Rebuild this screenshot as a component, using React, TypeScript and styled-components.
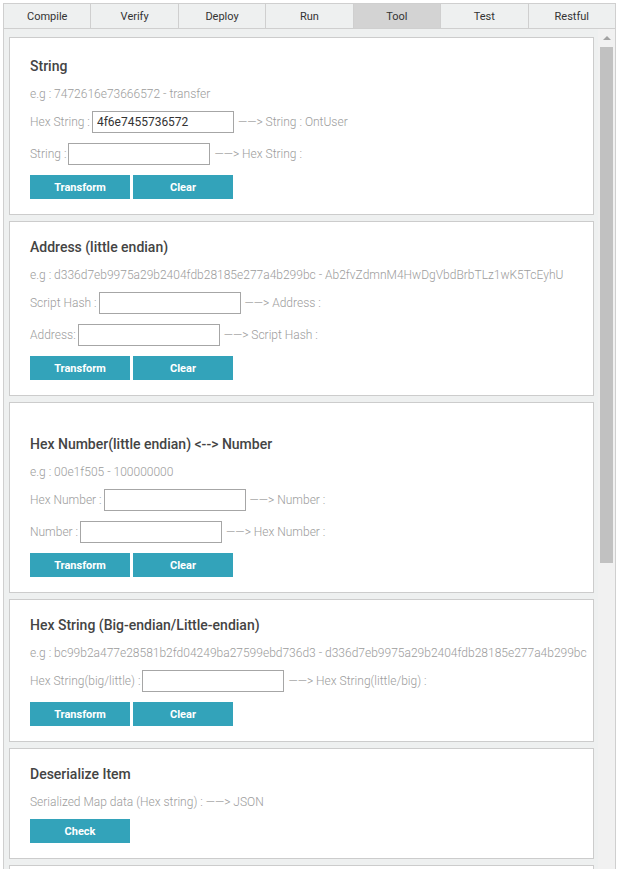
import React from "react";
import styled, { createGlobalStyle } from "styled-components";

const Global = createGlobalStyle`
  html, body { margin: 0; padding: 0; overflow: hidden; background: #fff; }
  body { font-family: Roboto, "Liberation Sans", Arial, sans-serif; }
  * { box-sizing: border-box; }
`;

const Frame = styled.div`
  margin: 3px 5px 0 3px;
  height: calc(100vh - 3px);
  border: 1px solid #cfcfcf;
  border-bottom: none;
  display: flex;
  flex-direction: column;
  overflow: hidden;
`;

const TabBar = styled.div`
  display: flex;
  height: 25px;
  border-bottom: 1px solid #cfcfcf;
  flex: none;
`;

const Tab = styled.div<{ $active?: boolean }>`
  flex: 1;
  display: flex;
  align-items: center;
  justify-content: center;
  font-size: 11px;
  color: #333;
  background: ${(p) => (p.$active ? "#d3d3d3" : "#eef0f0")};
  border-right: 1px solid #cfcfcf;
  &:last-child { border-right: none; }
`;

const Body = styled.div`
  flex: 1;
  display: flex;
  background: #eef0f0;
  min-height: 0;
`;

const Column = styled.div`
  flex: 1;
  display: flex;
  flex-direction: column;
  gap: 6px;
  padding: 8px 4px 0 5px;
  overflow: hidden;
`;

const Track = styled.div`
  width: 17px;
  flex: none;
  background: #f1f1f1;
  display: flex;
  flex-direction: column;
  align-items: center;
`;

const ArrowBox = styled.div`
  height: 18px;
  width: 17px;
  display: flex;
  align-items: center;
  justify-content: center;
  padding-bottom: 2px;
`;

const Thumb = styled.div`
  width: 13px;
  height: 516px;
  background: #c1c1c1;
`;

const Card = styled.section<{ $pt: number }>`
  background: #fff;
  border: 1px solid #cccccc;
  padding: ${(p) => p.$pt}px 20px 15px;
  display: flex;
  flex-direction: column;
  flex: none;
  min-height: 60px;
`;

const Title = styled.h3`
  margin: 0 0 8px;
  font-size: 14px;
  line-height: 20px;
  font-weight: 500;
  color: #444;
`;

const Note = styled.div`
  font-size: 12px;
  line-height: 20px;
  font-weight: 300;
  color: #9c9c9c;
  white-space: nowrap;
`;

const Row = styled.div<{ $mt: number }>`
  margin-top: ${(p) => p.$mt}px;
  height: 24px;
  display: flex;
  align-items: center;
  font-size: 12px;
  font-weight: 300;
  color: #9c9c9c;
  white-space: nowrap;
`;

const Field = styled.input`
  width: 142px;
  height: 22px;
  margin: 0 4px 0 2px;
  padding: 0 4px;
  border: 1px solid #a6a6a6;
  border-radius: 0;
  font-family: Roboto, "Liberation Sans", Arial, sans-serif;
  font-size: 12px;
  color: #333;
  outline: none;
`;

const Buttons = styled.div<{ $mt: number }>`
  margin-top: ${(p) => p.$mt}px;
  display: flex;
  gap: 3px;
`;

const Button = styled.button`
  width: 100px;
  height: 24px;
  border: none;
  padding: 0;
  background: #33a3ba;
  color: #fff;
  font-family: Roboto, "Liberation Sans", Arial, sans-serif;
  font-size: 11px;
  font-weight: 700;
  cursor: pointer;
`;

const tabs = ["Compile", "Verify", "Deploy", "Run", "Tool", "Test", "Restful"];

function ConvRow({ mt, label, value, result }: { mt: number; label: string; value?: string; result: string }) {
  return (
    <Row $mt={mt}>
      {label}
      <Field defaultValue={value ?? ""} />
      {result}
    </Row>
  );
}

function Actions({ mt }: { mt: number }) {
  return (
    <Buttons $mt={mt}>
      <Button>Transform</Button>
      <Button>Clear</Button>
    </Buttons>
  );
}

export default function App() {
  return (
    <>
      <Global />
      <Frame>
        <TabBar>
          {tabs.map((t) => (
            <Tab key={t} $active={t === "Tool"}>
              {t}
            </Tab>
          ))}
        </TabBar>
        <Body>
          <Column>
            <Card $pt={18}>
              <Title>String</Title>
              <Note>e.g : 7472616e73666572 - transfer</Note>
              <ConvRow mt={6} label="Hex String :" value="4f6e7455736572" result="——> String : OntUser" />
              <ConvRow mt={8} label="String :" result="——> Hex String :" />
              <Actions mt={9} />
            </Card>
            <Card $pt={15}>
              <Title>Address (little endian)</Title>
              <Note>e.g : d336d7eb9975a29b2404fdb28185e277a4b299bc - Ab2fvZdmnM4HwDgVbdBrbTLz1wK5TcEyhU</Note>
              <ConvRow mt={6} label="Script Hash :" result="——> Address :" />
              <ConvRow mt={8} label="Address:" result="——> Script Hash :" />
              <Actions mt={9} />
            </Card>
            <Card $pt={31}>
              <Title>Hex Number(little endian) &lt;--&gt; Number</Title>
              <Note>e.g : 00e1f505 - 100000000</Note>
              <ConvRow mt={6} label="Hex Number :" result="——> Number :" />
              <ConvRow mt={8} label="Number :" result="——> Hex Number :" />
              <Actions mt={9} />
            </Card>
            <Card $pt={15}>
              <Title>Hex String (Big-endian/Little-endian)</Title>
              <Note>e.g : bc99b2a477e28581b2fd04249ba27599ebd736d3 - d336d7eb9975a29b2404fdb28185e277a4b299bc</Note>
              <ConvRow mt={6} label="Hex String(big/little) :" result="——> Hex String(little/big) :" />
              <Actions mt={9} />
            </Card>
            <Card $pt={15}>
              <Title>Deserialize Item</Title>
              <Note>Serialized Map data (Hex string) : ——&gt; JSON</Note>
              <Buttons $mt={7}>
                <Button>Check</Button>
              </Buttons>
            </Card>
            <Card $pt={15} />
          </Column>
          <Track>
            <ArrowBox>
              <svg width="8" height="5" viewBox="0 0 8 5">
                <path d="M0 5 L4 1 L8 5 Z" fill="#a3a3a3" />
              </svg>
            </ArrowBox>
            <Thumb />
          </Track>
        </Body>
      </Frame>
    </>
  );
}
